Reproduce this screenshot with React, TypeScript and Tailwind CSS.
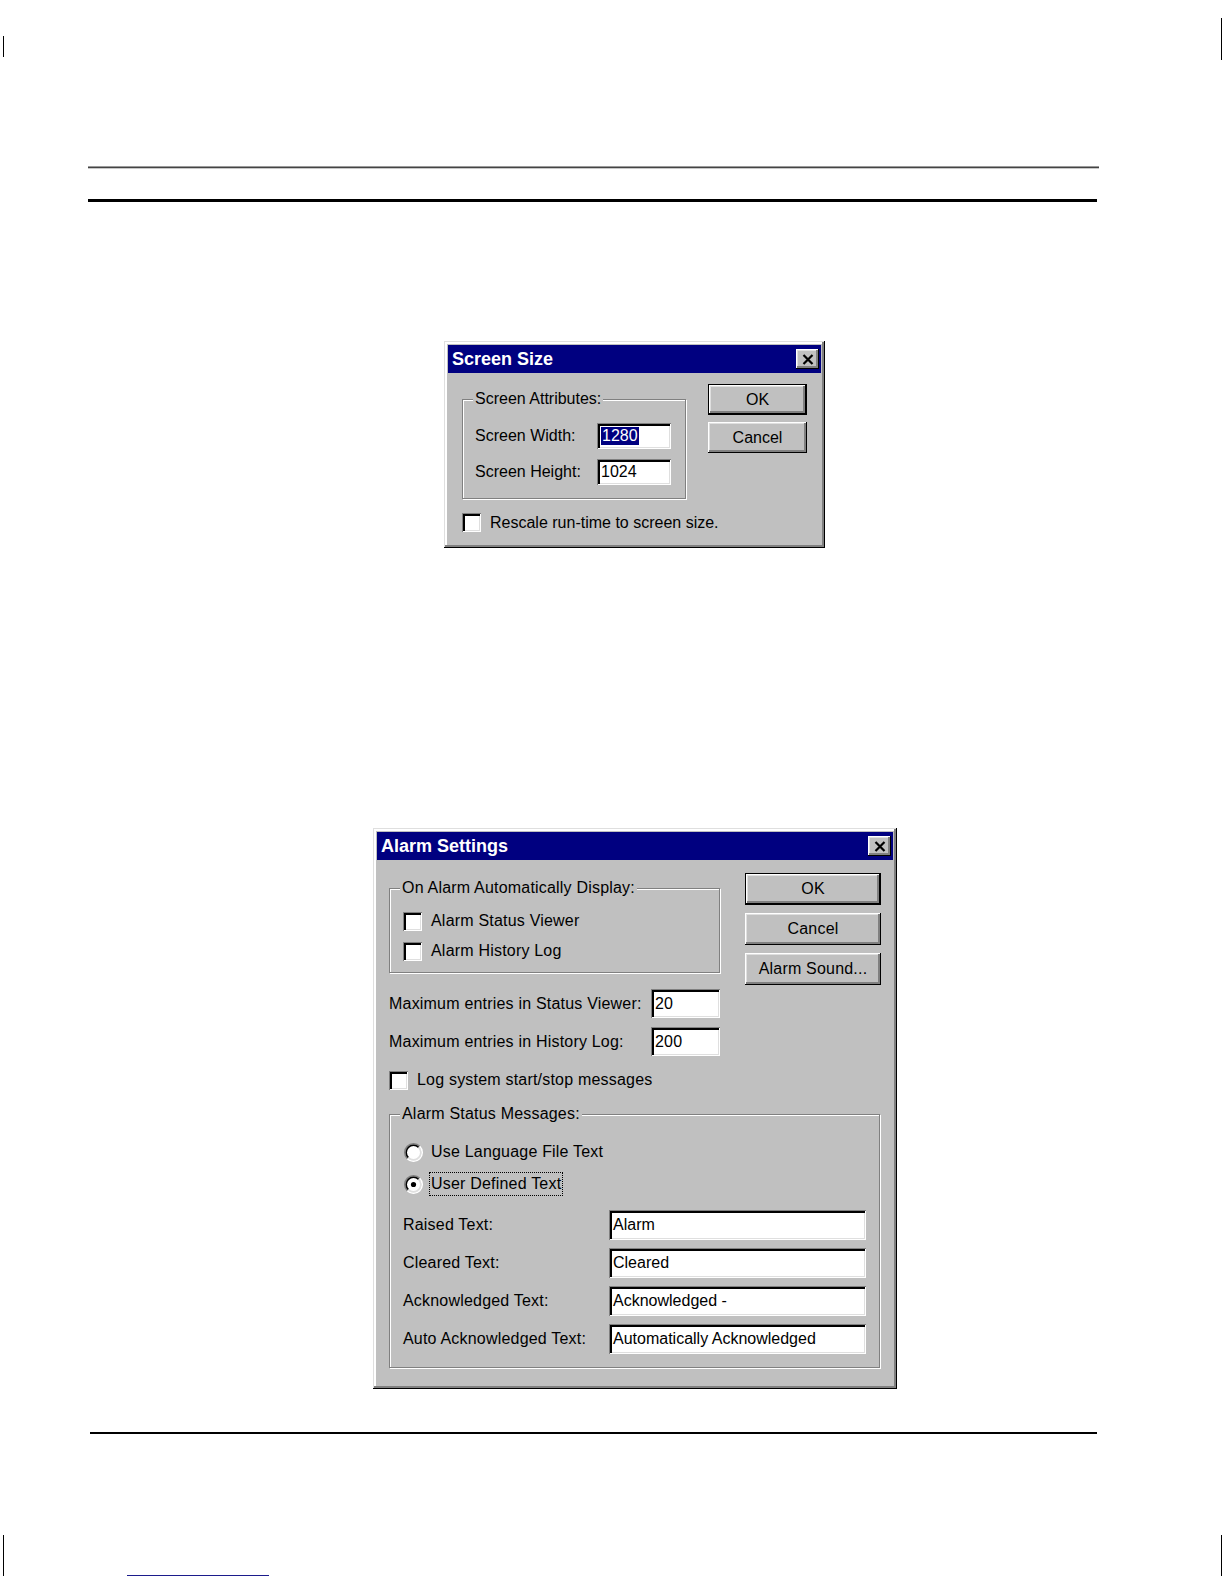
import React from "react";

const RAISED =
  "shadow-[inset_-1px_-1px_0_#000,inset_1px_1px_0_#fff,inset_-3px_-3px_0_#808080,inset_2px_2px_0_#dfdfdf]";
const SUNKEN =
  "shadow-[inset_1px_1px_0_#808080,inset_-1px_-1px_0_#fff,inset_3px_3px_0_#000,inset_-2px_-2px_0_#dfdfdf]";
const WINDOW =
  "shadow-[inset_-1px_-1px_0_#000,inset_1px_1px_0_#dfdfdf,inset_-3px_-3px_0_#808080,inset_3px_3px_0_#fff]";
const GROUP = "border border-[#808080] shadow-[1px_1px_0_#fff,inset_1px_1px_0_#fff]";

function CloseBtn() {
  return (
    <div className={`flex h-[20px] w-[23px] items-center justify-center bg-[#c0c0c0] ${RAISED}`}>
      <svg width="12" height="11" viewBox="0 0 12 11">
        <path d="M1.5 1 L10.5 10 M10.5 1 L1.5 10" stroke="#000" strokeWidth="2.2" />
      </svg>
    </div>
  );
}

function TitleBar({ title }: { title: string }) {
  return (
    <div className="flex h-[28px] items-center justify-between bg-[#000080] pl-[4px] pr-[2px]">
      <span className="text-[18px] font-bold leading-none text-white">{title}</span>
      <CloseBtn />
    </div>
  );
}

function Btn({ label, isDefault, className }: { label: string; isDefault?: boolean; className: string }) {
  return (
    <div
      className={`flex items-center justify-center bg-[#c0c0c0] text-[16px] leading-[18px] text-black ${
        isDefault ? "border border-black" : ""
      } ${className}`}
    >
      <div className={`flex h-full w-full items-center justify-center ${RAISED}`}>{label}</div>
    </div>
  );
}

function Input({ children, className }: { children?: React.ReactNode; className: string }) {
  return (
    <div className={`flex items-center bg-white pl-[4px] text-[16px] leading-[18px] text-black ${SUNKEN} ${className}`}>
      {children}
    </div>
  );
}

function Check() {
  return <div className={`h-[19px] w-[19px] shrink-0 bg-white ${SUNKEN}`} />;
}

function Radio({ checked }: { checked?: boolean }) {
  return (
    <svg width="19" height="19" viewBox="0 0 19 19" className="shrink-0">
      <circle cx="9.5" cy="9.5" r="8" fill="#fff" />
      <path d="M3.31 15.69 A8.75 8.75 0 0 1 15.69 3.31" fill="none" stroke="#808080" strokeWidth="1.5" />
      <path d="M15.69 3.31 A8.75 8.75 0 0 1 3.31 15.69" fill="none" stroke="#fff" strokeWidth="1.5" />
      <path d="M4.37 14.63 A7.25 7.25 0 0 1 14.63 4.37" fill="none" stroke="#000" strokeWidth="1.5" />
      <path d="M14.63 4.37 A7.25 7.25 0 0 1 4.37 14.63" fill="none" stroke="#dfdfdf" strokeWidth="1.5" />
      {checked && <circle cx="9.5" cy="9.5" r="2.6" fill="#000" />}
    </svg>
  );
}

function Legend({ children, offset }: { children: React.ReactNode; offset: string }) {
  return (
    <legend className={`bg-[#c0c0c0] px-[2px] text-[16px] leading-[18px] text-black ${offset}`}>{children}</legend>
  );
}

function ScreenSizeDialog() {
  return (
    <div className={`ml-[444px] mt-[139px] h-[207px] w-[381px] bg-[#c0c0c0] p-[4px] ${WINDOW}`}>
      <TitleBar title="Screen Size" />
      <div className="flex pl-[14px] pt-[11px] text-[16px] leading-[18px] text-black">
        <div className="mt-[6px] w-[224px]">
          <fieldset className={`w-[224px] pb-[13px] pl-[12px] pt-[15px] ${GROUP}`}>
            <Legend offset="-ml-[2px]">Screen Attributes:</Legend>
            <div className="flex h-[26px] items-center">
              <span className="w-[122px]">Screen Width:</span>
              <Input className="h-[26px] w-[74px]">
                <span className="bg-[#000080] px-[1px] text-white">1280</span>
              </Input>
            </div>
            <div className="mt-[10px] flex h-[26px] items-center">
              <span className="w-[122px]">Screen Height:</span>
              <Input className="h-[26px] w-[74px]">1024</Input>
            </div>
          </fieldset>
          <div className="mt-[14px] flex items-center">
            <Check />
            <span className="ml-[9px] whitespace-nowrap">Rescale run-time to screen size.</span>
          </div>
        </div>
        <div className="ml-[22px] flex flex-col gap-[7px]">
          <Btn label="OK" isDefault className="h-[31px] w-[99px]" />
          <Btn label="Cancel" className="h-[31px] w-[99px]" />
        </div>
      </div>
    </div>
  );
}

function AlarmDialog() {
  const fields: [string, string][] = [
    ["Raised Text:", "Alarm"],
    ["Cleared Text:", "Cleared"],
    ["Acknowledged Text:", "Acknowledged -"],
    ["Auto Acknowledged Text:", "Automatically Acknowledged"],
  ];
  return (
    <div className={`ml-[373px] mt-[280px] h-[561px] w-[524px] bg-[#c0c0c0] p-[4px] ${WINDOW}`}>
      <TitleBar title="Alarm Settings" />
      <div className="pl-[12px] pt-[13px] text-[16px] leading-[18px] tracking-[0.2px] text-black">
        <div className="flex">
          <div className="mt-[6px] w-[331px]">
            <fieldset className={`w-[331px] pb-[11px] pl-[13px] pt-[14px] ${GROUP}`}>
              <Legend offset="-ml-[3px]">On Alarm Automatically Display:</Legend>
              <div className="flex h-[20px] items-center">
                <Check />
                <span className="ml-[9px]">Alarm Status Viewer</span>
              </div>
              <div className="mt-[10px] flex h-[20px] items-center">
                <Check />
                <span className="ml-[9px]">Alarm History Log</span>
              </div>
            </fieldset>
            <div className="mt-[16px] flex items-center">
              <span className="w-[262px] whitespace-nowrap">Maximum entries in Status Viewer:</span>
              <Input className="h-[29px] w-[69px]">20</Input>
            </div>
            <div className="mt-[9px] flex items-center">
              <span className="w-[262px] whitespace-nowrap">Maximum entries in History Log:</span>
              <Input className="h-[29px] w-[69px]">200</Input>
            </div>
            <div className="mt-[14px] flex h-[20px] items-center">
              <Check />
              <span className="ml-[9px]">Log system start/stop messages</span>
            </div>
          </div>
          <div className="ml-[25px] flex flex-col gap-[8px]">
            <Btn label="OK" isDefault className="h-[32px] w-[136px]" />
            <Btn label="Cancel" className="h-[32px] w-[136px]" />
            <Btn label="Alarm Sound..." className="h-[32px] w-[136px]" />
          </div>
        </div>
        <fieldset className={`mt-[15px] w-[491px] pb-[13px] pl-[13px] pr-[13px] pt-[17px] ${GROUP}`}>
          <Legend offset="-ml-[3px]">Alarm Status Messages:</Legend>
          <div className="flex h-[24px] items-center">
            <span className="ml-[1px] flex">
              <Radio />
            </span>
            <span className="ml-[8px]">Use Language File Text</span>
          </div>
          <div className="mt-[8px] flex h-[24px] items-center">
            <span className="ml-[1px] flex">
              <Radio checked />
            </span>
            <span className="ml-[6px] border border-dotted border-black px-[1px] py-[2px]">User Defined Text</span>
          </div>
          <div className="mt-[14px] flex flex-col gap-[8px]">
            {fields.map(([label, value]) => (
              <div key={label} className="flex items-center">
                <span className="w-[206px] whitespace-nowrap">{label}</span>
                <Input className="h-[30px] w-[257px] tracking-normal">{value}</Input>
              </div>
            ))}
          </div>
        </fieldset>
      </div>
    </div>
  );
}

export default function App() {
  return (
    <div className="relative h-[1584px] w-[1224px] overflow-hidden bg-white font-['Liberation_Sans',Arial,sans-serif]">
      {/* crop marks */}
      <div className="absolute left-[3px] top-[36px] h-[21px] w-[1px] bg-black" />
      <div className="absolute left-[1221px] top-[18px] h-[42px] w-[1px] bg-black" />
      <div className="absolute left-[3px] top-[1535px] h-[41px] w-[1px] bg-black" />
      <div className="absolute left-[1221px] top-[1535px] h-[41px] w-[1px] bg-black" />

      <div className="pt-[166px]">
        <div className="ml-[88px] w-[1011px]">
          <div className="h-[1px] bg-[#9a9a9a]" />
          <div className="h-[1px] bg-[#444]" />
          <div className="h-[1px] bg-[#c8c8c8]" />
        </div>
        <div className="ml-[88px] mt-[30px] h-[3px] w-[1009px] bg-black" />
        <ScreenSizeDialog />
        <AlarmDialog />
        <div className="ml-[90px] mt-[43px] h-[2px] w-[1007px] bg-black" />
        <div className="ml-[127px] mt-[141px] h-[1px] w-[142px] bg-[#1c1c8c]" />
      </div>
    </div>
  );
}
